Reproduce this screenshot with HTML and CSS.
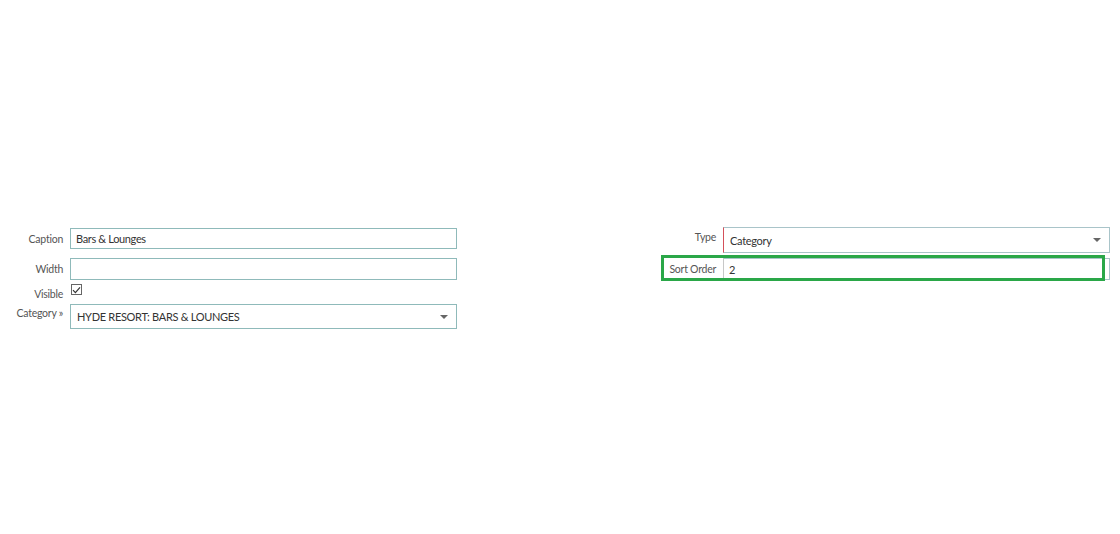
FILE: index.html
```html
<!DOCTYPE html>
<html lang="en">
<head>
  <meta charset="UTF-8">
  <title>Menu Item</title>
  <link rel="stylesheet" href="styles.css">
</head>
<body>
  <form class="editor">
    <div class="col col-left">
      <div class="row row-caption">
        <label class="lbl">Caption</label>
        <input class="field" value="Bars &amp; Lounges">
      </div>
      <div class="row row-width">
        <label class="lbl">Width</label>
        <input class="field" value="">
      </div>
      <div class="row row-visible">
        <label class="lbl">Visible</label>
        <span class="check">
          <svg width="9" height="8" viewBox="0 0 9 8"><path d="M1 4.2 L3.4 6.6 L8 1.4" fill="none" stroke="#333" stroke-width="1.2"/></svg>
        </span>
      </div>
      <div class="row row-category">
        <label class="lbl">Category »</label>
        <div class="select select-wide">
          <span>HYDE RESORT: BARS &amp; LOUNGES</span>
          <i class="caret"></i>
        </div>
      </div>
    </div>

    <div class="col col-right">
      <div class="row row-type">
        <label class="lbl">Type</label>
        <div class="select select-type">
          <span>Category</span>
          <i class="caret"></i>
        </div>
      </div>
      <div class="row row-sort">
        <label class="lbl">Sort Order</label>
        <input class="field field-sort" value="2">
      </div>
    </div>
  </form>
</body>
</html>
```

FILE: styles.css
```css
* { box-sizing: border-box; }

body {
  margin: 0;
  background: #fff;
  font-family: Lato, 'Liberation Sans', sans-serif;
  color: #333;
}

.editor {
  display: grid;
  grid-template-columns: 560px 560px;
  padding-top: 227px;
}

.col {
  display: flex;
  flex-direction: column;
}

.row {
  display: flex;
  align-items: center;
}

.lbl {
  font-size: 10.5px;
  letter-spacing: -0.25px;
  color: #555;
  text-align: right;
  flex-shrink: 0;
}

.col-left .lbl {
  width: 63px;
  margin-right: 7px;
}

.col-right .lbl {
  width: 156px;
  margin-right: 7px;
}

.field {
  width: 387px;
  height: 21px;
  margin: 0;
  border: 1px solid #8fbaba;
  padding: 0 5px;
  font-family: inherit;
  font-size: 11px;
  letter-spacing: -0.35px;
  color: #333;
  outline: none;
}

.row-caption { margin-top: 1px; }

.row-width { margin-top: 9px; }
.row-width .field { height: 22px; }

.row-visible {
  margin-top: 4px;
  align-items: flex-start;
  height: 20px;
}
.row-visible .lbl { margin-top: 4px; }

.check {
  width: 11px;
  height: 11px;
  border: 1px solid #666;
  display: flex;
  align-items: center;
  justify-content: center;
  margin-left: 1px;
}

.row-category { align-items: flex-start; }
.row-category .lbl { margin-top: 3px; }

.select {
  width: 387px;
  display: flex;
  align-items: center;
  justify-content: space-between;
  border: 1px solid #8fbaba;
  padding: 0 8px 0 6px;
  font-size: 11px;
  letter-spacing: -0.3px;
  color: #333;
}

.select-wide { height: 25px; }

.select-type {
  height: 26px;
  border-color: #a9c4c9;
  border-left-color: #d4505a;
  padding-left: 6px;
}

.row-type { align-items: flex-start; }
.row-type .lbl { margin-top: 4px; }

.caret {
  width: 0;
  height: 0;
  border-left: 4px solid transparent;
  border-right: 4px solid transparent;
  border-top: 4px solid #666;
}

.row-sort {
  margin-top: 5px;
  position: relative;
}

.field-sort {
  height: 22px;
  border-color: #a9c4c9;
  border-left-color: #c8c8c8;
}

/* highlight drawn over the sort order row */
.row-sort::after {
  content: "";
  box-sizing: border-box;
  position: absolute;
  left: 101px;
  top: -3px;
  width: 444px;
  height: 26px;
  border: 3px solid #2aa748;
  pointer-events: none;
}
```
